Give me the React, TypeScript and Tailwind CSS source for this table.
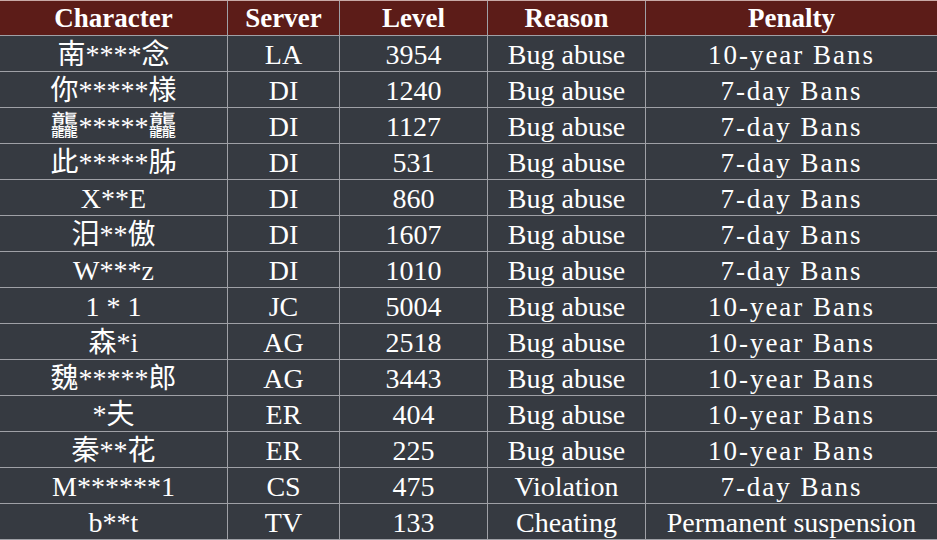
import React from "react";

const rows = [
  ["南****念", "LA", "3954", "Bug abuse", "10-year Bans"],
  ["你*****様", "DI", "1240", "Bug abuse", "7-day Bans"],
  ["龘*****龘", "DI", "1127", "Bug abuse", "7-day Bans"],
  ["此*****胏", "DI", "531", "Bug abuse", "7-day Bans"],
  ["X**E", "DI", "860", "Bug abuse", "7-day Bans"],
  ["汨**傲", "DI", "1607", "Bug abuse", "7-day Bans"],
  ["W***z", "DI", "1010", "Bug abuse", "7-day Bans"],
  ["1 * 1", "JC", "5004", "Bug abuse", "10-year Bans"],
  ["森*i", "AG", "2518", "Bug abuse", "10-year Bans"],
  ["魏*****郎", "AG", "3443", "Bug abuse", "10-year Bans"],
  ["*夫", "ER", "404", "Bug abuse", "10-year Bans"],
  ["秦**花", "ER", "225", "Bug abuse", "10-year Bans"],
  ["M******1", "CS", "475", "Violation", "7-day Bans"],
  ["b**t", "TV", "133", "Cheating", "Permanent suspension"],
];

export default function App() {
  return (
    <div className="w-[937px] h-[540px] overflow-hidden bg-[#363a41] text-white font-[Liberation_Serif,Noto_Sans_CJK_SC,serif]">
      <div className="flex h-9 bg-[#5c1c18] border-t border-t-[#c9a9a6] border-b border-b-[#9fa0a6] font-bold text-[27px] leading-none">
        <div className="w-[228px] flex items-center justify-center border-r border-[#9fa0a6]">Character</div>
        <div className="w-[112px] flex items-center justify-center border-r border-[#9fa0a6]">Server</div>
        <div className="w-[148px] flex items-center justify-center border-r border-[#9fa0a6]">Level</div>
        <div className="w-[158px] flex items-center justify-center border-r border-[#9fa0a6]">Reason</div>
        <div className="flex-1 flex items-center justify-center">Penalty</div>
      </div>
      {rows.map((r, i) => (
        <div key={i} className="flex h-9 border-b border-[#9fa0a6] text-[28px] leading-none">
          <div className="w-[228px] flex items-center justify-center pt-[3px] border-r border-[#9fa0a6]">{r[0]}</div>
          <div className="w-[112px] flex items-center justify-center pt-[3px] border-r border-[#9fa0a6]">{r[1]}</div>
          <div className="w-[148px] flex items-center justify-center pt-[3px] border-r border-[#9fa0a6]">{r[2]}</div>
          <div className="w-[158px] flex items-center justify-center pt-[3px] border-r border-[#9fa0a6]">{r[3]}</div>
          <div
            className={
              r[4].startsWith("Permanent")
                ? "flex-1 flex items-center justify-center pt-[3px]"
                : "flex-1 flex items-center justify-center pt-[3px] text-[27px] tracking-[2px]"
            }
          >
            {r[4]}
          </div>
        </div>
      ))}
    </div>
  );
}
